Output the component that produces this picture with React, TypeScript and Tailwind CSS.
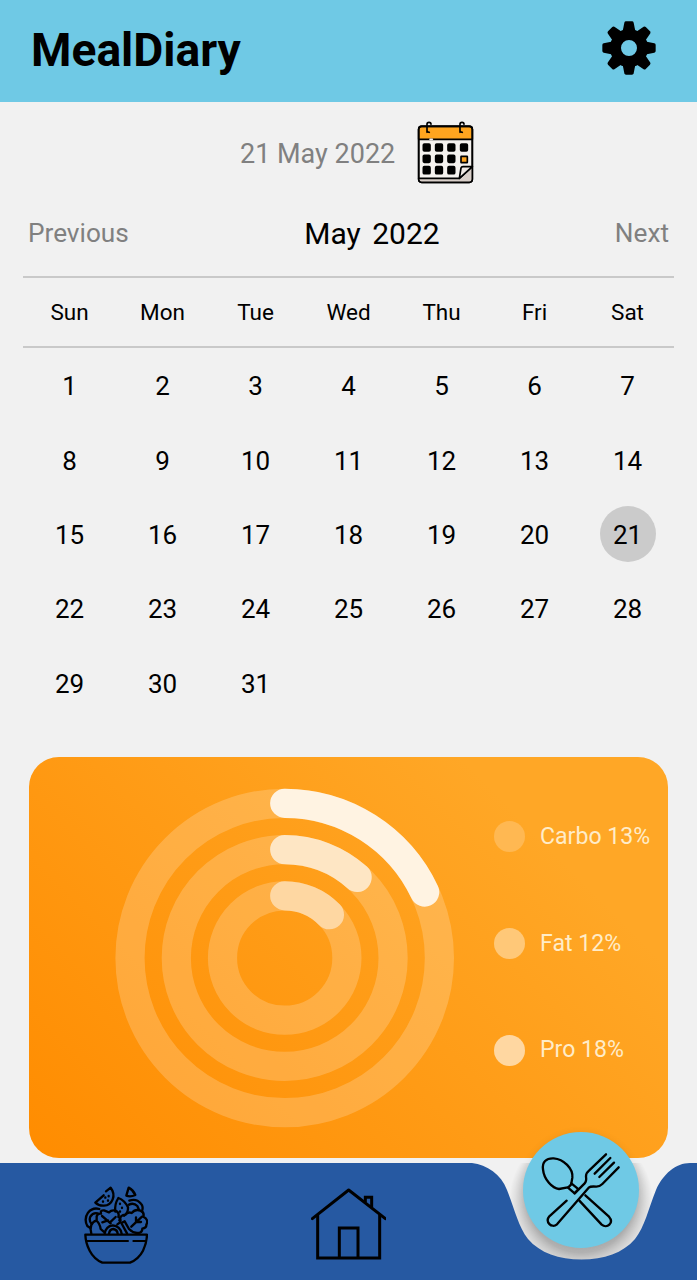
const WEEKDAYS = ['Sun', 'Mon', 'Tue', 'Wed', 'Thu', 'Fri', 'Sat'];
const DAYS = Array.from({ length: 31 }, (_, i) => i + 1);
const SELECTED = 21;

const RINGS = [
  { radius: 154.7, share: 0.18, color: 'rgb(255 243 226)' },
  { radius: 108.4, share: 0.1165, color: 'rgb(254 230 196)' },
  { radius: 62.2, share: 0.1277, color: 'rgb(254 215 162)' },
];

const LEGEND = [
  { label: 'Carbo 13%', dot: 'bg-[#ffb852]' },
  { label: 'Fat 12%', dot: 'bg-[#ffc878]' },
  { label: 'Pro 18%', dot: 'bg-[#ffd7a1]' },
];

function GearIcon() {
  return (
    <svg className="h-[54px] w-[54px]" viewBox="-81 -81 162 162">
      {[0, 45, 90, 135, 180, 225, 270, 315].map((a) => (
        <path key={a} transform={`rotate(${a})`} d="M-20 -46 L-14 -76 Q-13 -80 -9 -80 H9 Q13 -80 14 -76 L20 -46Z" />
      ))}
      <circle r="40.5" fill="none" stroke="#000" strokeWidth="33" />
    </svg>
  );
}

function CalendarIcon() {
  return (
    <svg className="h-[63px] w-[57px]" viewBox="36 33 171 189" fill="none" stroke="#000" strokeWidth="5" strokeLinecap="round" strokeLinejoin="round">
      <rect x="41" y="49" width="161" height="168" rx="9" fill="#f5f2ef" />
      <path d="M42 207H160L202 170V208Q202 217 193 217H50Q42 217 42 207Z" fill="#d9cfc9" stroke="none" />
      <path d="M41 88V58Q41 49 50 49H193Q202 49 202 58V88Z" fill="#ffa51f" />
      <path d="M75 88H82" stroke="#f5f2ef" strokeWidth="5" />
      <rect x="41" y="49" width="161" height="168" rx="9" />
      <path d="M41 205H163L202 170" />
      <path d="M163 205L168 174Q169 170 174 170H202Z" fill="#eee8e3" />
      <path d="M66 67V43Q66 37 72 37T78 43M66 62Q67 67 73 67M165 67V43Q165 37 171 37T177 43M165 62Q166 67 172 67" />
      {[100, 134, 168].map((y) =>
        [53, 90, 127, 165].map((x) =>
          x === 165 && y > 100 ? null : (
            <rect key={`${x}-${y}`} x={x + 2} y={y + 2} width="20" height="21" rx="3" fill="#000" />
          ),
        ),
      )}
      <rect x="168" y="139" width="19" height="19" rx="1" fill="#ffa51f" />
    </svg>
  );
}

function SaladIcon() {
  return (
    <svg className="h-[79px] w-[64px]" viewBox="42 45 192 237" fill="none" stroke="#000" strokeWidth="7" strokeLinecap="round" strokeLinejoin="round">
      <path d="M46 194H231Q230 220 219 242Q206 267 180 278H97Q72 267 59 242Q47 220 46 194Z" />
      <path d="M52 213H174M190 213H227" strokeWidth="6" />
      <path d="M108 64L122 53Q135 70 128 88Q121 106 102 107Q86 108 76 98L101 76M106 82V83M116 78V79M114 91V92M99 94V95" />
      <path d="M176 53L169 77Q182 82 196 75Q190 60 176 53Z" />
      <path d="M136 125Q133 103 145 84Q164 91 174 112Q175 129 162 137M150 101V102M156 113V114M150 124V125" />
      <path d="M178 92Q199 84 213 101Q221 110 216 124M177 104Q191 97 202 108L207 119" />
      <path d="M88 117Q68 111 54 128Q41 147 52 168L61 174M83 130Q69 127 61 140Q56 152 65 162" />
      <path d="M64 191Q59 178 64 165Q69 154 79 152Q89 159 92 177L101 185M80 153V139Q83 129 93 131Q90 120 102 121L117 127Q126 118 139 123Q149 130 145 141Q155 145 150 157L142 163M96 138L122 160M114 151L97 157M120 157L137 141" />
      <path d="M104 191Q108 168 128 166Q151 168 155 191M117 191Q119 178 130 177Q142 179 143 191" />
      <path d="M148 151Q151 134 166 134Q174 124 185 129Q196 116 211 122Q224 127 220 140Q237 149 229 164Q230 174 217 176Q217 188 203 189Q190 190 177 177L164 154L154 159L171 190M184 170L216 140M198 156V142M200 156H213" />
    </svg>
  );
}

function HomeIcon() {
  return (
    <svg className="h-[72px] w-[75px]" viewBox="33 38 225 216" fill="none" stroke="#000" strokeWidth="9">
      <path d="M37 130L146 44L256 130" strokeLinejoin="round" strokeLinecap="round" />
      <path d="M53 119V248H239V119M118 248V158H174V248M196 80V66H215V96" />
    </svg>
  );
}

function CutleryIcon() {
  return (
    <svg className="h-[76px] w-[80px]" viewBox="18 36 240 228" fill="none" stroke="#000" strokeWidth="7" strokeLinecap="round" strokeLinejoin="round">
      <path d="M109 130L112 113C115 86 86 57 56 55C33 54 21 66 24 88C27 119 52 145 72 147L98 142L119 160L128 150" />
      <path d="M109 130L131 148M100 142L108 134" />
      <path d="M95 182L43 229C29 246 50 266 66 253L161 143Q167 138 184 140Q194 140 202 132L251 82" />
      <path d="M119 160L149 130Q155 124 153 109Q153 99 162 92L213 43M179 101L226 54M193 111L237 68" />
      <path d="M151 166L222 230C238 249 216 267 200 254L133 182" />
    </svg>
  );
}

function MacroRings() {
  return (
    <svg className="h-[340px] w-[340px] shrink-0" viewBox="-169.7 -170 340 340" fill="none" strokeWidth="29.2">
      {RINGS.map(({ radius, share, color }) => {
        const angle = share * Math.PI * 2;
        const x = radius * Math.sin(angle);
        const y = -radius * Math.cos(angle);
        return (
          <g key={radius}>
            <circle r={radius} stroke="#fff" strokeOpacity="0.2" />
            <path d={`M0 ${-radius}A${radius} ${radius} 0 0 1 ${x} ${y}`} stroke={color} strokeLinecap="round" />
          </g>
        );
      })}
    </svg>
  );
}

export default function App() {
  return (
    <div className="relative flex h-[1280px] w-[697px] flex-col overflow-hidden bg-[#f1f1f1] font-['Roboto',sans-serif] text-black">
      <header className="flex h-[102px] shrink-0 items-center justify-between bg-[#6fc9e5] pr-[41px] pb-[6px] pl-[31px]">
        <h1 className="pt-[4px] text-[46.2px] leading-none font-bold">MealDiary</h1>
        <GearIcon />
      </header>

      <div className="mt-[18px] flex h-[64px] shrink-0 items-center gap-[22px] pl-[240px] text-[27px] text-[#808080]">
        <span className="w-[155px] pt-[5px] whitespace-nowrap">21 May 2022</span>
        <CalendarIcon />
      </div>

      <section className="mx-[23px] mt-[18px] shrink-0">
        <div className="grid h-[63px] grid-cols-3 items-center px-[5px] text-[26.2px] text-[#808080]">
          <span>Previous</span>
          <h2 className="pl-[47px] text-center text-[30px] [word-spacing:4px] whitespace-nowrap text-black">May 2022</h2>
          <span className="text-right">Next</span>
        </div>
        <div className="mt-[11px] grid h-[72px] grid-cols-7 items-center border-y-2 border-[#c9c9c9] text-center text-[22.5px]">
          {WEEKDAYS.map((d) => (
            <span key={d} className="pt-[2px]">{d}</span>
          ))}
        </div>
        <div className="grid auto-rows-[74.4px] grid-cols-7 place-items-center text-[26px]">
          {DAYS.map((d) => (
            <span
              key={d}
              className={
                d === SELECTED
                  ? 'flex size-[56px] items-center justify-center rounded-full bg-[#cbcbcb] pt-[3px]'
                  : 'flex size-[56px] items-center justify-center pt-[3px]'
              }
            >
              {d}
            </span>
          ))}
        </div>
      </section>

      <section className="mx-[29px] mt-[37px] flex h-[401px] shrink-0 items-center rounded-[30px] bg-linear-[45deg,#ff8c00,#ffa726_80%] pt-[2px] pl-[86px]">
        <MacroRings />
        <ul className="mb-[30px] ml-[39px] flex h-[249px] flex-col justify-between">
          {LEGEND.map(({ label, dot }) => (
            <li key={label} className="flex items-center gap-[15px] text-[23.1px] whitespace-nowrap text-[#ffecc8]">
              <span className={`size-[31px] rounded-full ${dot}`} />
              <span className="pt-px">{label}</span>
            </li>
          ))}
        </ul>
      </section>

      <nav className="relative mt-auto flex h-[117px] shrink-0">
        <svg className="absolute inset-0 h-[117px] w-[697px]" viewBox="0 0 697 117" fill="#2659a2">
          <defs>
            <radialGradient id="notchShade" gradientUnits="userSpaceOnUse" cx="581" cy="38" r="72">
              <stop offset="0.72" stopColor="#000" stopOpacity="0.24" />
              <stop offset="1" stopColor="#000" stopOpacity="0" />
            </radialGradient>
          </defs>
          <circle cx="581" cy="38" r="72" fill="url(#notchShade)" />
          <path d="M0 0H472C487 2 501 11 507 27C515 47 518 63 528 76C540 90 559 96.500 581.500 96.500C604 96.500 623 90 635 76C645 63 648 47 656 27C663 11 676 0 690 0H697V117H0Z" />
        </svg>
        <button className="relative mt-[22px] ml-[84px] h-[79px]" aria-label="Meals">
          <SaladIcon />
        </button>
        <button className="relative mt-[25px] ml-[163px] h-[72px]" aria-label="Home">
          <HomeIcon />
        </button>
        <button
          className="absolute top-[-31px] left-[523px] flex size-[116px] items-center justify-center rounded-full bg-[#6fc9e5] shadow-[0_2px_8px_rgba(0,0,0,0.1)]"
          aria-label="Add meal"
        >
          <CutleryIcon />
        </button>
      </nav>
    </div>
  );
}
